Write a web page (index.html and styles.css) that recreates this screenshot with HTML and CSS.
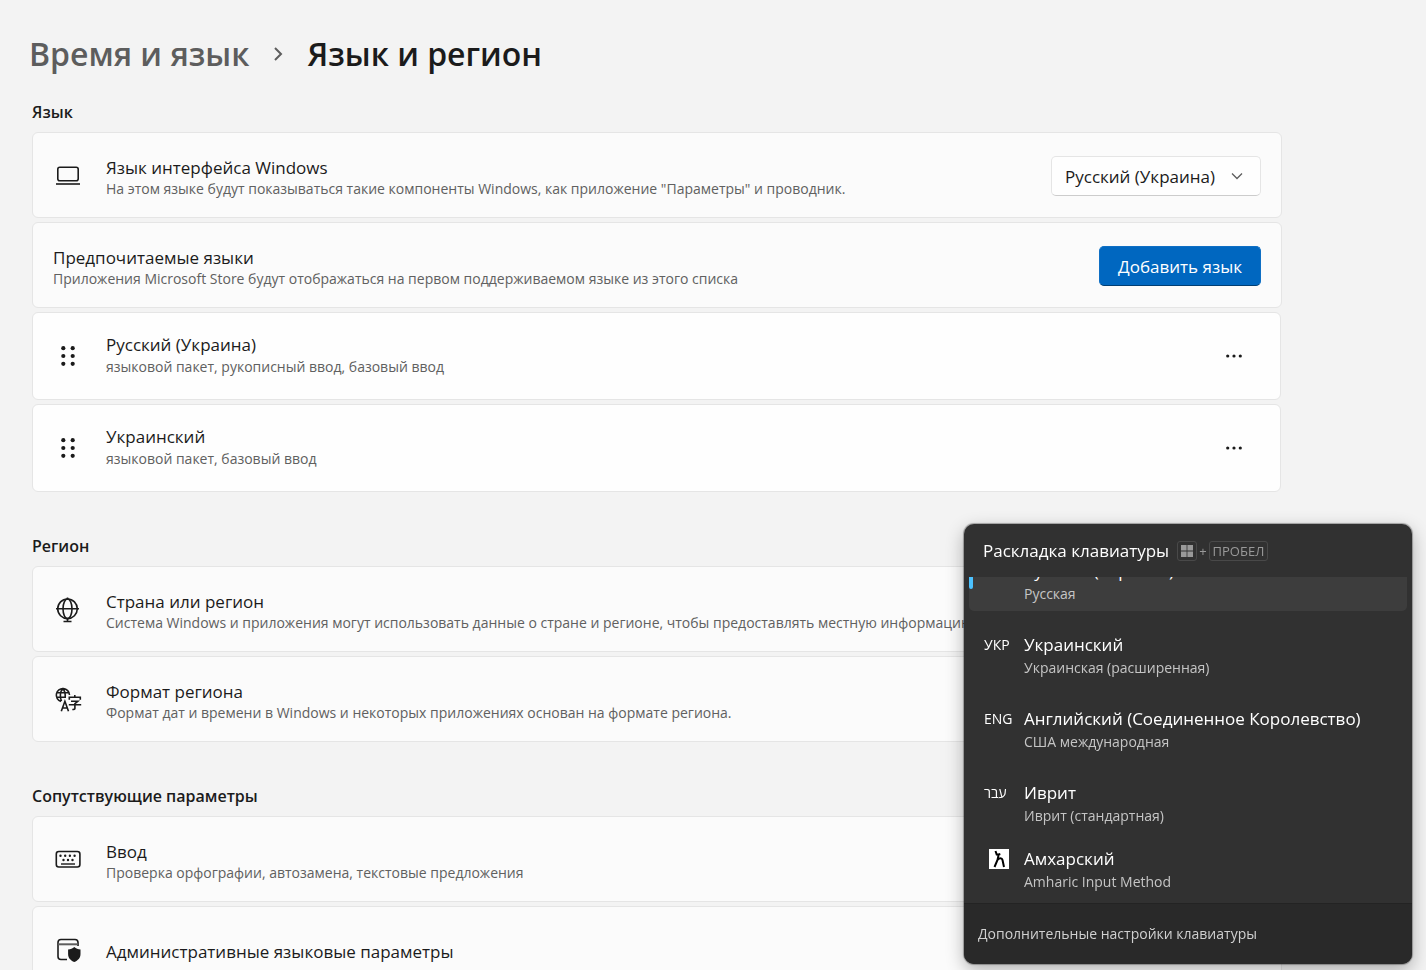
FILE: index.html
```html
<!DOCTYPE html>
<html lang="ru">
<head>
<meta charset="utf-8">
<title>Язык и регион</title>
<link rel="stylesheet" href="styles.css">
</head>
<body>
<main class="page">
  <nav class="crumbs" aria-label="Навигация">
    <a class="crumb-link" href="#time">Время и язык</a>
    <svg class="crumb-arrow" viewBox="0 0 10 16" aria-hidden="true"><path d="M2 2l6 6-6 6"/></svg>
    <h1 class="crumb-current">Язык и регион</h1>
  </nav>

  <section class="group">
    <h2 class="group-title">Язык</h2>
    <div class="cards">
      <div class="card">
        <svg class="icon" viewBox="0 0 28 28" aria-hidden="true"><rect x="3.800" y="5.300" width="20.400" height="13.400" rx="2"/><path d="M2 22h24"/></svg>
        <div class="text">
          <label class="name" for="ui-lang">Язык интерфейса Windows</label>
          <p class="note">На этом языке будут показываться такие компоненты Windows, как приложение "Параметры" и проводник.</p>
        </div>
        <div class="picker">
          <select class="picker-select" id="ui-lang"><option>Русский (Украина)</option></select>
          <svg class="picker-arrow" viewBox="0 0 12 8" aria-hidden="true"><path d="M1 1.5l5 5 5-5"/></svg>
        </div>
      </div>
      <div class="card card-plain">
        <div class="text">
          <h3 class="name">Предпочитаемые языки</h3>
          <p class="note">Приложения Microsoft Store будут отображаться на первом поддерживаемом языке из этого списка</p>
        </div>
        <button class="primary" type="button">Добавить язык</button>
      </div>
      <div class="card card-item">
        <svg class="icon icon-solid" viewBox="0 0 28 28" aria-hidden="true"><circle cx="9.3" cy="6.2" r="2.1"/><circle cx="18.7" cy="6.2" r="2.1"/><circle cx="9.3" cy="14" r="2.1"/><circle cx="18.7" cy="14" r="2.1"/><circle cx="9.3" cy="21.8" r="2.1"/><circle cx="18.7" cy="21.8" r="2.1"/></svg>
        <div class="text">
          <h3 class="name">Русский (Украина)</h3>
          <p class="note">языковой пакет, рукописный ввод, базовый ввод</p>
        </div>
        <button class="more" type="button" aria-label="Параметры: Русский"><svg class="more-icon" viewBox="0 0 18 4" aria-hidden="true"><circle cx="2.7" cy="2" r="1.6"/><circle cx="9" cy="2" r="1.6"/><circle cx="15.3" cy="2" r="1.6"/></svg></button>
      </div>
      <div class="card card-item">
        <svg class="icon icon-solid" viewBox="0 0 28 28" aria-hidden="true"><circle cx="9.3" cy="6.2" r="2.1"/><circle cx="18.7" cy="6.2" r="2.1"/><circle cx="9.3" cy="14" r="2.1"/><circle cx="18.7" cy="14" r="2.1"/><circle cx="9.3" cy="21.8" r="2.1"/><circle cx="18.7" cy="21.8" r="2.1"/></svg>
        <div class="text">
          <h3 class="name">Украинский</h3>
          <p class="note">языковой пакет, базовый ввод</p>
        </div>
        <button class="more" type="button" aria-label="Параметры: Украинский"><svg class="more-icon" viewBox="0 0 18 4" aria-hidden="true"><circle cx="2.7" cy="2" r="1.6"/><circle cx="9" cy="2" r="1.6"/><circle cx="15.3" cy="2" r="1.6"/></svg></button>
      </div>
    </div>
  </section>

  <section class="group">
    <h2 class="group-title">Регион</h2>
    <div class="cards">
      <div class="card">
        <svg class="icon" viewBox="0 0 28 28" aria-hidden="true"><circle cx="13.5" cy="12.8" r="9.8"/><ellipse cx="13.5" cy="12.8" rx="4.5" ry="9.8"/><path d="M2 12.8h23M13.5 1.500v1.500M13.500 22.500v3M9.500 25.500h8"/></svg>
        <div class="text">
          <h3 class="name">Страна или регион</h3>
          <p class="note">Система Windows и приложения могут использовать данные о стране и регионе, чтобы предоставлять местную информацию.</p>
        </div>
      </div>
      <div class="card">
        <svg class="icon" viewBox="0 0 28 28" aria-hidden="true"><path d="M7 15.500A6.600 6.600 0 1 1 15.500 9M2.600 6.800h12.600M2.600 11.200h9.400M7.500 15.200C5.800 12 5.800 5.500 8.800 2.600C10.800 4.500 11.500 7.500 11.200 12"/><path d="M7.300 25.300l3.600-10 3.600 10M8.700 22h4.400"/><path d="M15.300 13.800v-2.600h11v2.600M20.800 9v2M17 15.300h6.800l-2.900 2.300v4.800q0 1.300-2.600 1.100M14.800 18.800h12.400"/></svg>
        <div class="text">
          <h3 class="name">Формат региона</h3>
          <p class="note">Формат дат и времени в Windows и некоторых приложениях основан на формате региона.</p>
        </div>
      </div>
    </div>
  </section>

  <section class="group">
    <h2 class="group-title">Сопутствующие параметры</h2>
    <div class="cards">
      <div class="card">
        <svg class="icon" viewBox="0 0 28 28" aria-hidden="true"><rect x="2.300" y="5.500" width="23.600" height="15.500" rx="2.500"/><path class="bar" d="M7 18h14"/><path class="dots" d="M6.500 9.800h0M11.200 9.800h0M15.900 9.800h0M20.600 9.800h0M9.500 14h0M14 14h0M18.500 14h0"/></svg>
        <div class="text">
          <h3 class="name">Ввод</h3>
          <p class="note">Проверка орфографии, автозамена, текстовые предложения</p>
        </div>
      </div>
      <div class="card card-single">
        <svg class="icon" viewBox="0 0 28 28" aria-hidden="true"><path d="M13 23.500H7a3 3 0 0 1-3-3V6.500a3 3 0 0 1 3-3h14a3 3 0 0 1 3 3V10"/><path class="bar" d="M4 8.300h20"/><path class="shield" d="M20.300 11c1.700 1.600 3.700 2.200 6.200 2.500v4.500c0 4-2.500 6.500-6.200 8-3.700-1.500-6.200-4-6.200-8v-4.500c2.500-.3 4.500-.9 6.200-2.500z"/></svg>
        <div class="text">
          <h3 class="name">Административные языковые параметры</h3>
        </div>
      </div>
    </div>
  </section>
</main>

<aside class="flyout" aria-label="Раскладка клавиатуры">
  <header class="flyout-head">
    <h2 class="flyout-title">Раскладка клавиатуры</h2>
    <div class="keys">
      <kbd class="key"><svg class="win" viewBox="0 0 12 12" aria-label="Windows"><path d="M0 0h5.600v5.600H0zM6.400 0H12v5.600H6.400zM0 6.400h5.600V12H0zM6.400 6.400H12V12H6.400z"/></svg></kbd>
      <span class="plus">+</span>
      <kbd class="key">ПРОБЕЛ</kbd>
    </div>
  </header>
  <div class="layouts">
    <button class="layout layout-active" type="button">
      <span class="code">РУС</span>
      <span class="layout-text"><span class="layout-name">Русский (Украина)</span><span class="layout-note">Русская</span></span>
    </button>
    <button class="layout" type="button">
      <span class="code">УКР</span>
      <span class="layout-text"><span class="layout-name">Украинский</span><span class="layout-note">Украинская (расширенная)</span></span>
    </button>
    <button class="layout" type="button">
      <span class="code">ENG</span>
      <span class="layout-text"><span class="layout-name">Английский (Соединенное Королевство)</span><span class="layout-note">США международная</span></span>
    </button>
    <button class="layout" type="button">
      <span class="code" lang="he">עבר</span>
      <span class="layout-text"><span class="layout-name">Иврит</span><span class="layout-note">Иврит (стандартная)</span></span>
    </button>
    <button class="layout layout-compact" type="button">
      <span class="code"><svg class="amharic" viewBox="0 0 20 20" aria-hidden="true"><rect class="tile" width="20" height="20"/><path d="M6.500 2l1.200 3.500h2L8.500 11 5.500 18M8.500 11c2-2.500 4.500-2.500 5 0l1.500 7M9.500 5.500l1.800-.5"/></svg></span>
      <span class="layout-text"><span class="layout-name">Амхарский</span><span class="layout-note">Amharic Input Method</span></span>
    </button>
  </div>
  <footer class="flyout-foot"><a class="foot-link" href="#keyboard">Дополнительные настройки клавиатуры</a></footer>
</aside>
</body>
</html>
```
FILE: styles.css
```css
* { box-sizing: border-box; }

body {
  margin: 0;
  height: 100vh;
  overflow: hidden;
  background: #f3f3f3;
  color: #1b1b1b;
  font-family: "Segoe UI", "Open Sans", "Noto Sans", sans-serif;
  font-size: 17px;
}

h1, h2, h3, p { margin: 0; font-weight: 400; }
button, select { font: inherit; }
a { color: inherit; text-decoration: none; }

.page { padding: 30px 32px; max-width: 1314px; }

.crumbs {
  display: flex;
  align-items: center;
  gap: 24px;
  margin-left: -3px;
  font-size: 32px;
  line-height: 48px;
}
.crumb-link { color: #5d5d5d; font-weight: 600; }
.crumb-current { font-size: inherit; font-weight: 600; }
.crumb-arrow { width: 10px; height: 16px; fill: none; stroke: #5d5d5d; stroke-width: 2; }

.group { margin-top: 42px; }
.crumbs + .group { margin-top: 22px; }
.group-title { font-size: 16px; font-weight: 600; line-height: 24px; }
.cards { display: flex; flex-direction: column; gap: 4px; margin-top: 8px; }

.card {
  display: flex;
  align-items: center;
  min-height: 86px;
  padding: 2px 20px 0;
  background: #fbfbfb;
  border: 1px solid #e5e5e5;
  border-radius: 6px;
}
.card-item { min-height: 88px; margin-right: 1px; padding: 0 32px 0 20px; background: #fefefe; }
.text { flex: 1; min-width: 0; padding-top: 3px; }
.card-item .text { padding-top: 0; }
.name { display: block; font-size: 17px; line-height: 22px; }
.note { color: #606060; font-size: 14px; line-height: 20px; white-space: nowrap; }
.card-item .note { line-height: 22px; }

.icon {
  flex: none;
  width: 28px;
  height: 28px;
  margin: 0 24px 0 1px;
  fill: none;
  stroke: #1b1b1b;
  stroke-width: 1.6;
}
.icon-solid { fill: #1b1b1b; stroke: none; }
.dots { stroke-width: 2.4; stroke-linecap: round; }
.bar { stroke: #5d5d5d; stroke-width: 2; }
.shield { fill: #1b1b1b; stroke: none; }

.picker { position: relative; }
.picker-select {
  appearance: none;
  height: 40px;
  padding: 0 44px 0 13px;
  background: #fefefe;
  border: 1px solid #e5e5e5;
  border-bottom-color: #cccccc;
  border-radius: 5px;
  color: inherit;
}
.picker-arrow {
  position: absolute;
  top: 16px;
  right: 18px;
  width: 12px;
  height: 8px;
  fill: none;
  stroke: #5d5d5d;
  stroke-width: 1.3;
  pointer-events: none;
}

.primary {
  height: 40px;
  padding: 0 18px;
  background: #0067c0;
  border: 1px solid #0f6fc4;
  border-bottom-color: #003e73;
  border-radius: 5px;
  color: #ffffff;
}

.more { display: flex; padding: 12px 5px; background: none; border: 0; }
.more-icon { width: 18px; height: 4px; fill: #1b1b1b; }

.flyout {
  position: fixed;
  right: 14px;
  bottom: 6px;
  display: flex;
  flex-direction: column;
  width: 448px;
  height: 440px;
  overflow: hidden;
  background: #313131;
  border-radius: 10px;
  box-shadow: 0 0 1px 1px rgba(0, 0, 0, 0.3), 0 6px 18px rgba(0, 0, 0, 0.3);
  color: #ffffff;
}
.flyout-head {
  display: flex;
  align-items: center;
  gap: 8px;
  height: 53px;
  padding: 0 19px;
}
.flyout-title { font-size: 17px; line-height: 24px; }
.keys { display: flex; align-items: center; gap: 2px; color: #999999; font-size: 13px; }
.key {
  display: flex;
  align-items: center;
  height: 20px;
  padding: 0 3px;
  border: 1px solid #494949;
  border-radius: 3px;
  font: inherit;
}
.win { width: 12px; height: 12px; fill: #999999; }

.layouts {
  display: flex;
  flex: 1;
  flex-direction: column;
  justify-content: flex-end;
  gap: 10px;
  min-height: 0;
  padding: 0 5px 4px;
  overflow: hidden;
}
.layout {
  position: relative;
  display: flex;
  flex: none;
  padding: 12px 15px 6px;
  background: none;
  border: 0;
  border-radius: 5px;
  color: inherit;
  text-align: left;
}
.layout-active { background: #3d3d3d; }
.layout-active::before {
  content: "";
  position: absolute;
  left: 0;
  top: 22px;
  width: 4px;
  height: 20px;
  border-radius: 2px;
  background: #4cc2ff;
}
.layout-compact { padding-top: 4px; }
.code { width: 40px; font-size: 14px; line-height: 24px; }
.layout-text { display: flex; flex-direction: column; }
.layout-name { font-size: 17px; line-height: 24px; }
.layout-note { color: #c5c5c5; font-size: 14px; line-height: 22px; }
.amharic { display: block; width: 20px; height: 20px; margin: 2px 0 0 5px; fill: none; stroke: #000000; stroke-width: 2; }
.tile { fill: #ffffff; stroke: none; }

.flyout-foot {
  display: flex;
  align-items: center;
  height: 61px;
  padding: 0 14px 2px;
  background: #292929;
  border-top: 1px solid #232323;
  color: #d0d0d0;
  font-size: 14px;
}
```
